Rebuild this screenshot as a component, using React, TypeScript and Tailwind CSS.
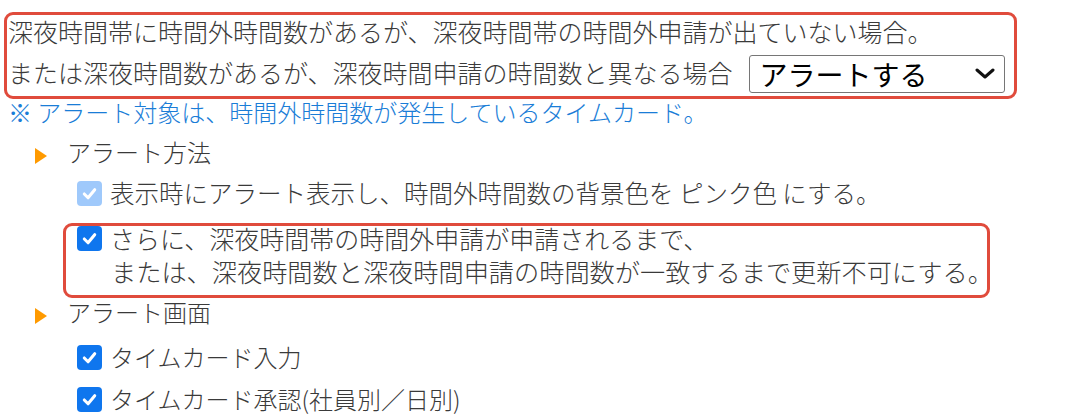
import React from "react";

const FONT = { fontFamily: '"Noto Sans CJK JP", "Noto Sans", sans-serif' };

function Check({ disabled = false }: { disabled?: boolean }) {
  return (
    <span
      className={
        "inline-flex w-[25px] h-[25px] rounded-[4px] items-center justify-center shrink-0 " +
        (disabled ? "bg-[#9fc9fb]" : "bg-[#0f76ee]")
      }
    >
      <svg width="19" height="19" viewBox="0 0 20 20">
        <path d="M4.5 10.5 L8.5 14.5 L15.5 6" fill="none" stroke="#fff" strokeWidth="3.2" strokeLinecap="round" strokeLinejoin="round" />
      </svg>
    </span>
  );
}

function Tri() {
  return (
    <svg width="12" height="16" viewBox="0 0 12 16" className="shrink-0 mt-[8px]">
      <path d="M0 0 L12 8 L0 16 Z" fill="#ff9a00" />
    </svg>
  );
}

export default function App() {
  return (
    <div className="relative w-[1073px] h-[419px] bg-white overflow-hidden text-[#3a3a3a] font-light" style={FONT}>
      <div className="ml-[4px] mt-[12px] w-[1013px] border-[3px] border-[#e04b3c] rounded-[9px] pl-[1px]">
        <div className="h-[36px] pb-[3px] flex items-center text-[25px] leading-none whitespace-nowrap">
          深夜時間帯に時間外時間数があるが、深夜時間帯の時間外申請が出ていない場合。
        </div>
        <div className="h-[45px] flex items-center text-[25px] leading-none whitespace-nowrap">
          <span className="mb-[2px]">または深夜時間数があるが、深夜時間申請の時間数と異なる場合</span>
          <div className="ml-[16px] w-[256px] h-[38px] border border-[#767676] rounded-[3px] flex items-center pl-[10px] pr-[9px] text-black font-normal">
            <span className="text-[28px] leading-none flex-1">アラートする</span>
            <svg width="20" height="11" viewBox="0 0 20 11">
              <path d="M2 2 L10 9 L18 2" fill="none" stroke="#111" strokeWidth="3" strokeLinecap="round" strokeLinejoin="round" />
            </svg>
          </div>
        </div>
      </div>

      <div className="h-[26px] pl-[8px] flex items-center text-[24px] leading-none text-[#1a7dd7] whitespace-nowrap">
        ※ アラート対象は、時間外時間数が発生しているタイムカード。
      </div>

      <div className="h-[54px] pl-[35px] flex items-center whitespace-nowrap">
        <Tri />
        <span className="ml-[20px] text-[24px] leading-none">アラート方法</span>
      </div>

      <div className="h-[28px] pl-[77px] flex items-center gap-[8px] whitespace-nowrap">
        <Check disabled />
        <span className="text-[24.5px] leading-none">表示時にアラート表示し、時間外時間数の背景色を ピンク色 にする。</span>
      </div>

      <div className="mt-[14px] h-[34px] pl-[77px] flex items-center gap-[8px] whitespace-nowrap">
        <Check />
        <span className="text-[25px] leading-none">さらに、深夜時間帯の時間外申請が申請されるまで、</span>
      </div>
      <div className="h-[34px] pl-[111px] flex items-center whitespace-nowrap">
        <span className="text-[25.2px] leading-none">または、深夜時間数と深夜時間申請の時間数が一致するまで更新不可にする。</span>
      </div>

      <div className="h-[46px] pl-[35px] flex items-center whitespace-nowrap">
        <Tri />
        <span className="ml-[20px] text-[24px] leading-none">アラート画面</span>
      </div>

      <div className="h-[44px] pl-[77px] flex items-center gap-[8px] whitespace-nowrap">
        <Check />
        <span className="text-[24px] leading-none">タイムカード入力</span>
      </div>
      <div className="h-[40px] pl-[77px] flex items-center gap-[8px] whitespace-nowrap">
        <Check />
        <span className="text-[24px] leading-none">タイムカード承認(社員別／日別)</span>
      </div>

      <div className="absolute left-[63px] top-[223px] w-[927px] h-[75px] border-[3px] border-[#e04b3c] rounded-[9px] pointer-events-none" />
    </div>
  );
}
